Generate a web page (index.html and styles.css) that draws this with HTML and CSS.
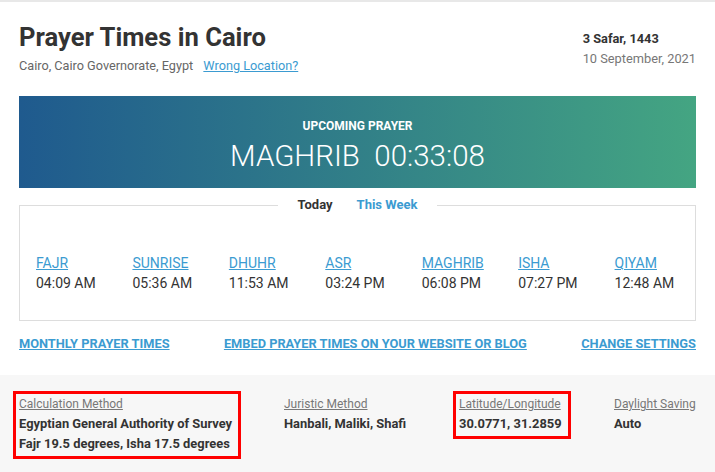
FILE: index.html
```html
<!DOCTYPE html>
<html lang="en">
<head>
    <meta charset="UTF-8">
    <meta name="viewport" content="width=device-width, initial-scale=1.0">
    <title>Prayer Times in Cairo</title>
    <link rel="stylesheet" href="styles.css">
</head>
<body>
    <div class="page">
        <div class="header">
            <div class="place">
                <h1>Prayer Times in Cairo</h1>
                <p class="location">Cairo, Cairo Governorate, Egypt <a href="#">Wrong Location?</a></p>
            </div>
            <div class="dates">
                <div class="hijri">3 Safar, 1443</div>
                <div class="gregorian">10 September, 2021</div>
            </div>
        </div>

        <div class="upcoming">
            <div class="upcoming-label">UPCOMING PRAYER</div>
            <div class="upcoming-time">MAGHRIB&nbsp; 00:33:08</div>
        </div>

        <div class="times-box">
            <div class="tabs">
                <span class="tab active">Today</span>
                <span class="tab">This Week</span>
            </div>
            <div class="times">
                <div class="prayer"><a href="#">FAJR</a><span>04:09 AM</span></div>
                <div class="prayer"><a href="#">SUNRISE</a><span>05:36 AM</span></div>
                <div class="prayer"><a href="#">DHUHR</a><span>11:53 AM</span></div>
                <div class="prayer"><a href="#">ASR</a><span>03:24 PM</span></div>
                <div class="prayer"><a href="#">MAGHRIB</a><span>06:08 PM</span></div>
                <div class="prayer"><a href="#">ISHA</a><span>07:27 PM</span></div>
                <div class="prayer"><a href="#">QIYAM</a><span>12:48 AM</span></div>
            </div>
        </div>

        <div class="links">
            <a href="#">MONTHLY PRAYER TIMES</a>
            <a href="#">EMBED PRAYER TIMES ON YOUR WEBSITE OR BLOG</a>
            <a href="#">CHANGE SETTINGS</a>
        </div>
    </div>

    <div class="settings">
        <div class="setting marked">
            <a href="#">Calculation Method</a>
            <b>Egyptian General Authority of Survey</b>
            <b>Fajr 19.5 degrees, Isha 17.5 degrees</b>
        </div>
        <div class="setting">
            <a href="#">Juristic Method</a>
            <b>Hanbali, Maliki, Shafi</b>
        </div>
        <div class="setting marked">
            <a href="#">Latitude/Longitude</a>
            <b>30.0771, 31.2859</b>
        </div>
        <div class="setting">
            <a href="#">Daylight Saving</a>
            <b>Auto</b>
        </div>
    </div>
</body>
</html>
```

FILE: styles.css
```css
body {
    margin: 0;
    font-family: Roboto, "Liberation Sans", sans-serif;
    color: #333;
    background-color: #fff;
    border-top: 2px solid #e8e8e8;
}
a {
    color: #3b9bd1;
}
.page {
    padding: 20px 19px 0;
}
.header {
    display: flex;
    justify-content: space-between;
}
h1 {
    margin: 0;
    font-size: 25.6px;
    line-height: 30px;
    font-weight: bold;
}
.location {
    margin: 6px 0 0;
    font-size: 12.7px;
    line-height: 16px;
    color: #666;
}
.location a {
    margin-left: 7px;
}
.dates {
    padding-top: 7px;
    font-size: 12.8px;
    line-height: 20px;
}
.hijri {
    font-weight: bold;
}
.gregorian {
    color: #777;
}

.upcoming {
    margin-top: 22px;
    padding: 22px 0 14px;
    text-align: center;
    color: #fff;
    background: linear-gradient(to right, #1f5a8e, #44a582);
}
.upcoming-label {
    font-size: 12px;
    line-height: 16px;
    font-weight: bold;
}
.upcoming-time {
    margin-top: 4px;
    font-size: 29.5px;
    line-height: 36px;
    font-weight: 300;
}

.times-box {
    margin-top: 17px;
    border: 1px solid #ddd;
    padding-bottom: 27px;
}
.tabs {
    display: flex;
    gap: 24px;
    width: fit-content;
    margin: -10px auto 0;
    padding: 0 20px;
    background-color: #fff;
    font-size: 13px;
    line-height: 18px;
    font-weight: bold;
}
.tab {
    color: #3b9bd1;
}
.tab.active {
    color: #333;
}
.times {
    display: grid;
    grid-template-columns: repeat(7, 1fr);
    margin-top: 39px;
}
.prayer {
    display: flex;
    flex-direction: column;
    align-items: flex-start;
    padding-left: 16px;
    font-size: 14px;
    line-height: 20px;
}

.links {
    display: flex;
    justify-content: space-between;
    margin-top: 15px;
    font-size: 12.8px;
    line-height: 16px;
    font-weight: bold;
}

.settings {
    display: grid;
    grid-template-columns: 265px 175px 155px 1fr;
    align-items: start;
    margin-top: 23px;
    padding: 16px 19px 15px;
    background-color: #f7f7f7;
    font-size: 12px;
    line-height: 20px;
}
.setting {
    display: flex;
    flex-direction: column;
    align-items: flex-start;
    justify-self: start;
    margin-left: -6px;
    padding: 0 6px 2px 3px;
    border: 3px solid transparent;
    white-space: nowrap;
}
.setting a {
    color: #777;
}
.setting b {
    font-size: 12.9px;
    color: #333;
}
.setting.marked {
    border-color: #f00;
}
```
